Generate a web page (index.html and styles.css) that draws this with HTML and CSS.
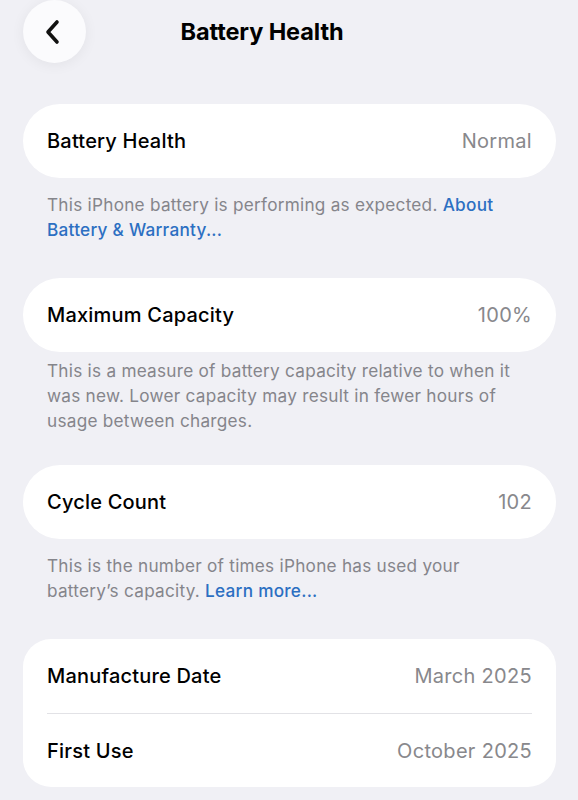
FILE: index.html
```html
<!DOCTYPE html>
<html>
<head>
<meta charset="utf-8">
<link rel="stylesheet" href="styles.css">
</head>
<body>
<div class="page">
  <header class="header">
    <button class="back" aria-label="Back">
      <svg width="18" height="26" viewBox="0 0 18 26"><path d="M13 3 L4 13 L13 23" fill="none" stroke="#111" stroke-width="3.6" stroke-linecap="round" stroke-linejoin="round"/></svg>
    </button>
    <h1 class="title">Battery Health</h1>
    <div class="spacer"></div>
  </header>

  <section class="group">
    <div class="card pill"><span class="label">Battery Health</span><span class="value">Normal</span></div>
    <p class="note">This iPhone battery is performing as expected. <span class="link">About Battery &amp; Warranty...</span></p>
  </section>

  <section class="group">
    <div class="card pill"><span class="label">Maximum Capacity</span><span class="value">100%</span></div>
    <p class="note note-tight">This is a measure of battery capacity relative to when it was new. Lower capacity may result in fewer hours of usage between charges.</p>
  </section>

  <section class="group">
    <div class="card pill"><span class="label">Cycle Count</span><span class="value">102</span></div>
    <p class="note">This is the number of times iPhone has used your battery’s capacity. <span class="link">Learn more...</span></p>
  </section>

  <section class="group">
    <div class="card list">
      <div class="row"><span class="label">Manufacture Date</span><span class="value">March 2025</span></div>
      <div class="row"><span class="label">First Use</span><span class="value">October 2025</span></div>
    </div>
  </section>
</div>
</body>
</html>
```
FILE: styles.css
```css
* { box-sizing: border-box; }
html, body { margin: 0; padding: 0; }
body {
  background: #f0f0f5;
  font-family: Inter, "Noto Sans", "Liberation Sans", sans-serif;
  color: #000;
  -webkit-font-smoothing: antialiased;
}
.page { width: 578px; padding: 0 22px 0 23px; }
.header {
  height: 104px;
  display: grid;
  grid-template-columns: 64px 1fr 119px;
  align-items: start;
}
.back {
  width: 63px; height: 63px;
  border-radius: 50%;
  border: none;
  background: #fbfbfd;
  box-shadow: 0 2px 14px rgba(0,0,0,0.06);
  display: flex; align-items: center; justify-content: center;
  padding: 0 4px 0 0;
  margin: 0;
}
.title {
  margin: 0;
  text-align: center;
  font-size: 23.5px;
  font-weight: 700;
  line-height: 63px;
  letter-spacing: -0.1px;
  white-space: nowrap;
}
.card { background: #fff; }
.pill {
  height: 74px;
  border-radius: 37px;
  padding: 0 24px;
  display: flex; align-items: center; justify-content: space-between;
}
.label { font-size: 20px; font-weight: 500; letter-spacing: 0.2px; }
.value { font-size: 20px; color: #88888c; letter-spacing: 0.3px; }
.note {
  margin: 0 0 36px;
  padding: 14px 36px 0 24px;
  font-size: 17.2px;
  line-height: 25px;
  color: #85858b;
  letter-spacing: 0.25px;
}
.note-tight { padding-top: 6px; margin-bottom: 32px; }
.link { color: #2c6fc2; font-weight: 500; }
.list {
  border-radius: 28px;
  padding: 0 24px;
}
.row {
  height: 74px;
  display: flex; align-items: center; justify-content: space-between;
}
.row + .row { border-top: 1px solid #e2e2e6; }
```
